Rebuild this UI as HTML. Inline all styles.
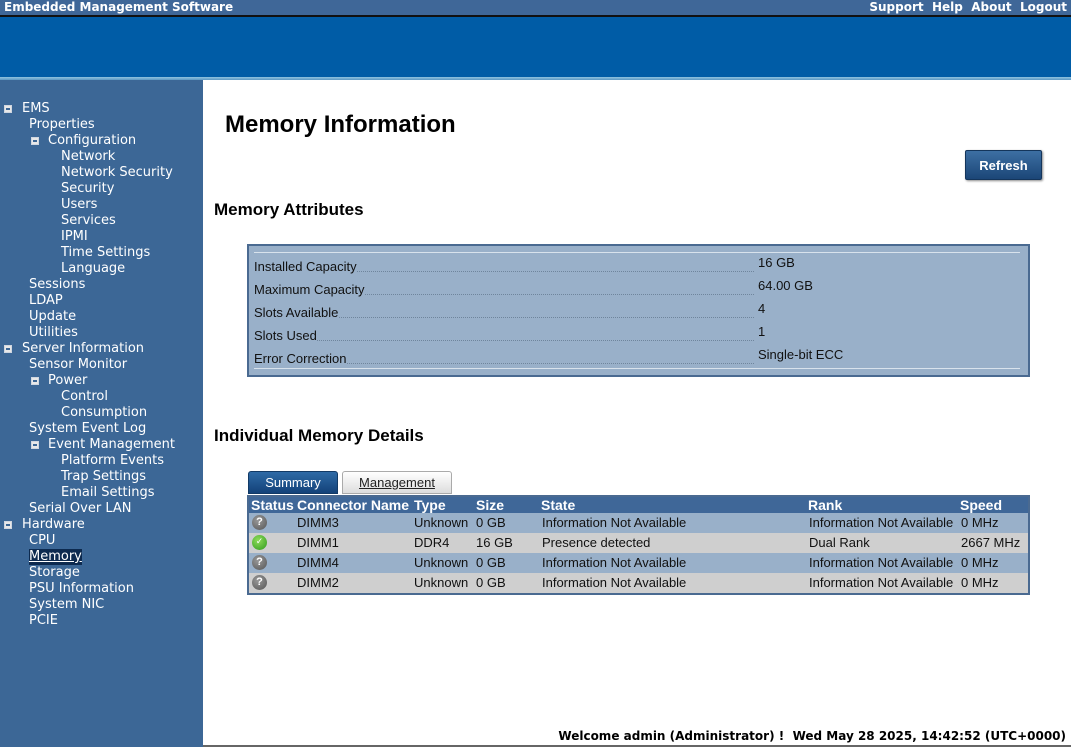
<!DOCTYPE html>
<html><head><meta charset="utf-8"><style>
*{margin:0;padding:0;box-sizing:border-box}
body{width:1071px;height:747px;position:relative;overflow:hidden;background:#fff;font-family:"Liberation Sans",Arial,sans-serif}
.a{position:absolute;white-space:nowrap}
#top{left:0;top:0;width:1071px;height:15px;background:#3f6798;color:#fff;font:bold 12px "DejaVu Sans",Verdana,sans-serif;line-height:14px}
#blk{left:0;top:15px;width:1071px;height:2px;background:#111}
#ban{left:0;top:17px;width:1071px;height:60px;background:#005ca6}
#ln{left:0;top:77px;width:1071px;height:3px;background:linear-gradient(#8fc3e0,#5b98c4)}
#side{left:0;top:80px;width:203px;height:667px;background:#3c6796}
#nav{position:absolute;left:0;top:2px}
.n{position:absolute;color:#fff;font:13px "DejaVu Sans",Verdana,sans-serif;line-height:16px;white-space:nowrap}
.ic{position:absolute;width:8px;height:8px;background:#e8e8e8;border:1px solid #cfd6e0}
.ic:after{content:"";position:absolute;left:1px;top:2px;width:4px;height:2px;background:#3c6796}
h1{position:absolute;left:225px;top:111px;font:bold 24px "Liberation Sans",Arial,sans-serif;color:#000}
h2{position:absolute;font:bold 17px "Liberation Sans",Arial,sans-serif;color:#000}
#btn{left:965px;top:150px;width:77px;height:30px;background:linear-gradient(#3d6fa3,#1b4677);border:1px solid #14355b;border-radius:2px;color:#fff;font:bold 13px "Liberation Sans",Arial,sans-serif;text-align:center;line-height:29px;box-shadow:1px 1px 2px #888}
#attr{left:247px;top:244px;width:783px;height:133px;background:#99b0c9;border:2px solid #4a6a91}
.r{position:absolute;left:5px;width:766px;font:13px "Liberation Sans",Arial,sans-serif;color:#111;height:18px}
.r .l{position:absolute;left:0;top:4px;width:500px;border-bottom:1px dotted #6f859c;height:13px}
.r span{background:#99b0c9;position:relative}
.r .v{position:absolute;left:504px;top:0}
.tab{position:absolute;top:471px;height:23px;font:13px "Liberation Sans",Arial,sans-serif;text-align:center;line-height:21px;border-radius:3px 3px 0 0}
#tbl{left:247px;top:495px;width:783px;height:100px;border:2px solid #4a6a91;background:#3f6798}
.row{position:absolute;left:0;width:779px;height:20px;font:13px "Liberation Sans",Arial,sans-serif;color:#111;line-height:20px}
.row div,.hd div{position:absolute;top:0}
.hd{position:absolute;left:0;top:0;width:779px;height:17px;color:#fff;font:bold 14px "Liberation Sans",Arial,sans-serif;line-height:17px}
.q{width:15px;height:15px;border-radius:50%;background:radial-gradient(circle at 40% 35%,#999,#555);color:#fff;font:bold 11px "Liberation Sans",Arial;text-align:center;line-height:15px;top:2px!important}
.ok{width:15px;height:15px;border-radius:50%;background:radial-gradient(circle at 40% 35%,#8fdc5a,#2f9a1e);color:#fff;font:bold 9px "DejaVu Sans";text-align:center;line-height:15px;top:2px!important}
#foot{right:5px;top:729px;font:bold 12px "DejaVu Sans",Verdana,sans-serif;color:#000}
</style></head><body>
<div class="a" id="top"><span style="position:absolute;left:4px">Embedded Management Software</span><span style="position:absolute;right:4px">Support&nbsp; Help&nbsp; About&nbsp; Logout</span></div>
<div class="a" id="blk"></div><div class="a" id="ban"></div><div class="a" id="ln"></div>
<div class="a" id="side"></div>
<div id="nav">
<div class="ic" style="left:4px;top:103px"></div><div class="n" style="left:22px;top:99px">EMS</div>
<div class="n" style="left:29px;top:115px">Properties</div>
<div class="ic" style="left:31px;top:135px"></div><div class="n" style="left:48px;top:131px">Configuration</div>
<div class="n" style="left:61px;top:147px">Network</div>
<div class="n" style="left:61px;top:163px">Network Security</div>
<div class="n" style="left:61px;top:179px">Security</div>
<div class="n" style="left:61px;top:195px">Users</div>
<div class="n" style="left:61px;top:211px">Services</div>
<div class="n" style="left:61px;top:227px">IPMI</div>
<div class="n" style="left:61px;top:243px">Time Settings</div>
<div class="n" style="left:61px;top:259px">Language</div>
<div class="n" style="left:29px;top:275px">Sessions</div>
<div class="n" style="left:29px;top:291px">LDAP</div>
<div class="n" style="left:29px;top:307px">Update</div>
<div class="n" style="left:29px;top:323px">Utilities</div>
<div class="ic" style="left:4px;top:343px"></div><div class="n" style="left:22px;top:339px">Server Information</div>
<div class="n" style="left:29px;top:355px">Sensor Monitor</div>
<div class="ic" style="left:31px;top:375px"></div><div class="n" style="left:48px;top:371px">Power</div>
<div class="n" style="left:61px;top:387px">Control</div>
<div class="n" style="left:61px;top:403px">Consumption</div>
<div class="n" style="left:29px;top:419px">System Event Log</div>
<div class="ic" style="left:31px;top:439px"></div><div class="n" style="left:48px;top:435px">Event Management</div>
<div class="n" style="left:61px;top:451px">Platform Events</div>
<div class="n" style="left:61px;top:467px">Trap Settings</div>
<div class="n" style="left:61px;top:483px">Email Settings</div>
<div class="n" style="left:29px;top:499px">Serial Over LAN</div>
<div class="ic" style="left:4px;top:519px"></div><div class="n" style="left:22px;top:515px">Hardware</div>
<div class="n" style="left:29px;top:531px">CPU</div>
<div class="n" style="left:29px;top:547px;background:#0d2a4f;text-decoration:underline">Memory</div>
<div class="n" style="left:29px;top:563px">Storage</div>
<div class="n" style="left:29px;top:579px">PSU Information</div>
<div class="n" style="left:29px;top:595px">System NIC</div>
<div class="n" style="left:29px;top:611px">PCIE</div>
</div>

<h1>Memory Information</h1>
<div class="a" id="btn">Refresh</div>
<h2 style="left:214px;top:200px">Memory Attributes</h2>
<div class="a" id="attr">
<div style="position:absolute;left:5px;top:6px;width:766px;height:1px;background:#d8e2ec"></div>
<div class="r" style="top:9px"><div class="l"><span>Installed Capacity</span></div><div class="v">16 GB</div></div>
<div class="r" style="top:32px"><div class="l"><span>Maximum Capacity</span></div><div class="v">64.00 GB</div></div>
<div class="r" style="top:55px"><div class="l"><span>Slots Available</span></div><div class="v">4</div></div>
<div class="r" style="top:78px"><div class="l"><span>Slots Used</span></div><div class="v">1</div></div>
<div class="r" style="top:101px"><div class="l"><span>Error Correction</span></div><div class="v">Single-bit ECC</div></div>
<div style="position:absolute;left:5px;top:122px;width:766px;height:1px;background:#d8e2ec"></div>
</div>
<h2 style="left:214px;top:426px">Individual Memory Details</h2>
<div class="tab" style="left:248px;width:90px;background:linear-gradient(#2e6aa6,#134279);color:#fff;border:1px solid #123a66">Summary</div>
<div class="tab" style="left:342px;width:110px;background:linear-gradient(#fff,#ddd);color:#222;border:1px solid #aaa;text-decoration:underline">Management</div>
<div class="a" id="tbl">
<div class="hd"><div style="left:2px">Status</div><div style="left:48px">Connector Name</div><div style="left:165px">Type</div><div style="left:227px">Size</div><div style="left:292px">State</div><div style="left:559px">Rank</div><div style="left:711px">Speed</div></div>
<div class="row" style="top:16px;background:#99b0c9"><div class="q" style="left:3px">?</div><div style="left:48px">DIMM3</div><div style="left:165px">Unknown</div><div style="left:227px">0 GB</div><div style="left:293px">Information Not Available</div><div style="left:560px">Information Not Available</div><div style="left:712px">0 MHz</div></div>
<div class="row" style="top:36px;background:#cfcfcf"><div class="ok" style="left:3px">✓</div><div style="left:48px">DIMM1</div><div style="left:165px">DDR4</div><div style="left:227px">16 GB</div><div style="left:293px">Presence detected</div><div style="left:560px">Dual Rank</div><div style="left:712px">2667 MHz</div></div>
<div class="row" style="top:56px;background:#99b0c9"><div class="q" style="left:3px">?</div><div style="left:48px">DIMM4</div><div style="left:165px">Unknown</div><div style="left:227px">0 GB</div><div style="left:293px">Information Not Available</div><div style="left:560px">Information Not Available</div><div style="left:712px">0 MHz</div></div>
<div class="row" style="top:76px;background:#cfcfcf"><div class="q" style="left:3px">?</div><div style="left:48px">DIMM2</div><div style="left:165px">Unknown</div><div style="left:227px">0 GB</div><div style="left:293px">Information Not Available</div><div style="left:560px">Information Not Available</div><div style="left:712px">0 MHz</div></div>
</div>
<div class="a" id="foot">Welcome admin (Administrator) !&nbsp; Wed May 28 2025, 14:42:52 (UTC+0000)</div>
<div class="a" style="left:203px;top:745px;width:868px;height:2px;background:#666"></div>
</body></html>
